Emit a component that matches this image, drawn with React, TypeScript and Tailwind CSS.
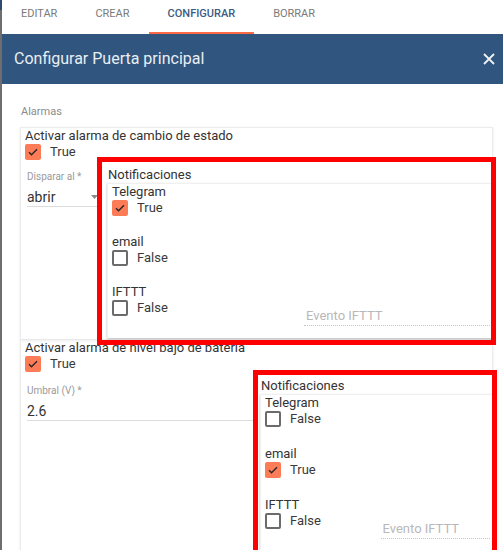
import React from "react"

const tabs = ["EDITAR", "CREAR", "CONFIGURAR", "BORRAR"]

function Check({ on }: { on: boolean }) {
  if (on) {
    return (
      <span className="w-4 h-4 rounded-[2px] bg-[#fd7c58] flex items-center justify-center shrink-0">
        <svg width="12" height="12" viewBox="0 0 24 24">
          <path d="M4 12.5l5 5L20 6.5" stroke="#262626" strokeWidth="2.8" fill="none" />
        </svg>
      </span>
    )
  }
  return <span className="w-4 h-4 rounded-[2px] border-2 border-[#6b6b6b] shrink-0" />
}

function BoolField({ label, on }: { label: string; on: boolean }) {
  return (
    <div>
      <div className="text-[13px] leading-4 text-[#333]">{label}</div>
      <div className="flex items-center gap-[9px] h-4">
        <Check on={on} />
        <span className="text-[13px] leading-4 text-[#3a3a3a]">{on ? "True" : "False"}</span>
      </div>
    </div>
  )
}

function Notificaciones({
  telegram,
  email,
  ifttt,
  red,
  gap,
}: {
  telegram: boolean
  email: boolean
  ifttt: boolean
  red: string
  gap: string
}) {
  return (
    <div className="relative flex-1">
      <div className="text-[13px] leading-4 text-[#333] pl-[1px]">Notificaciones</div>
      <div className={"border-t border-l border-[#f0f0f0] shadow-[0_1px_2px_rgba(0,0,0,0.28)] pl-[4px] pb-[12px] flex flex-col " + gap}>
        <BoolField label="Telegram" on={telegram} />
        <BoolField label="email" on={email} />
        <div className="grid grid-cols-2">
          <BoolField label="IFTTT" on={ifttt} />
          <div className="pt-[24px] pl-[2px] pr-[2px]">
            <div className="text-[13px] leading-4 text-[#b8b8b8] pl-[2px] pb-[1px] border-b border-dotted border-[#c4c4c4]">
              Evento IFTTT
            </div>
          </div>
        </div>
      </div>
      {/* marco rojo de anotación */}
      <div className={"absolute border-[5px] border-[#ff0000] pointer-events-none " + red} />
    </div>
  )
}

function TextInput({ label, value, arrow }: { label: string; value: string; arrow?: boolean }) {
  return (
    <div className="border-b border-[#dcdcdc] pb-[1px]">
      <div className="text-[10px] leading-3 text-[#9a9a9a]">{label}</div>
      <div className="flex items-center justify-between mt-[6px] pr-[4px]">
        <span className="text-[14px] leading-4 text-[#333]">{value}</span>
        {arrow && (
          <svg width="7" height="4" viewBox="0 0 7 4">
            <path d="M0 0h7L3.5 4z" fill="#8a8a8a" />
          </svg>
        )}
      </div>
    </div>
  )
}

export default function App() {
  return (
    <div className="w-[503px] h-[550px] overflow-hidden bg-white flex font-[Roboto,'Liberation_Sans',sans-serif]">
      <div className="w-[2px] shrink-0 flex flex-col">
        <div className="h-[10px] bg-[#2d4b6e]" />
        <div className="flex-1 bg-[#6e6e6e]" />
      </div>

      <div className="flex-1 flex flex-col">
        <div className="h-[34px] shrink-0 flex">
          {tabs.map((t) => {
            const active = t === "CONFIGURAR"
            return (
              <div
                key={t}
                className={
                  "px-[19px] pt-[7px] text-[11px] leading-[13px] border-b-2 " +
                  (active
                    ? "text-[#3a5c85] font-medium border-[#fb6a45]"
                    : "text-[#7a7a7a] border-transparent")
                }
              >
                {t}
              </div>
            )
          })}
        </div>

        <div className="h-[50px] shrink-0 bg-[#30557e] flex items-center justify-between pl-[12px] pr-[8px]">
          <span className="text-[16px] text-[#e9eef4]">Configurar Puerta principal</span>
          <svg width="12" height="12" viewBox="0 0 12 12">
            <path d="M1 1l10 10M11 1L1 11" stroke="#eef2f7" strokeWidth="1.8" />
          </svg>
        </div>

        <div className="shrink-0 pl-[18px] pr-[10px]">
          <div className="mt-[21px] mb-[8px] pl-[1px] text-[11px] leading-[14px] text-[#8c8c8c]">Alarmas</div>

          <div className="border border-[#ececec] shadow-[0_1px_3px_rgba(0,0,0,0.08)] pl-[4px] pb-[1px]">
            <div className="text-[13px] leading-4 text-[#333]">Activar alarma de cambio de estado</div>
            <div className="flex items-center gap-[9px] h-4">
              <Check on={true} />
              <span className="text-[13px] leading-4 text-[#3a3a3a]">True</span>
            </div>
            <div className="flex mt-[7px] pl-[2px] gap-[5px]">
              <div className="w-[75px] mt-[4px] self-start">
                <TextInput label="Disparar al *" value="abrir" arrow />
              </div>
              <Notificaciones
                telegram={true}
                email={false}
                ifttt={false}
                gap="gap-[18px]"
                red="-left-[10px] -top-[10px] -right-[4px] -bottom-[7px]"
              />
            </div>
          </div>

          <div className="border border-t-0 border-[#ececec] shadow-[0_1px_3px_rgba(0,0,0,0.08)] pl-[4px] pb-[1px]">
            <div className="text-[13px] leading-4 text-[#333]">Activar alarma de nivel bajo de bateria</div>
            <div className="flex items-center gap-[9px] h-4">
              <Check on={true} />
              <span className="text-[13px] leading-4 text-[#3a3a3a]">True</span>
            </div>
            <div className="flex mt-[6px] pl-[2px] gap-[5px]">
              <div className="w-[228px] mt-[7px] self-start">
                <TextInput label="Umbral (V) *" value="2.6" />
              </div>
              <Notificaciones
                telegram={false}
                email={true}
                ifttt={false}
                gap="gap-[19px]"
                red="-left-[7px] -top-[8px] -right-[5px] -bottom-[7px]"
              />
            </div>
          </div>
        </div>
      </div>
    </div>
  )
}
